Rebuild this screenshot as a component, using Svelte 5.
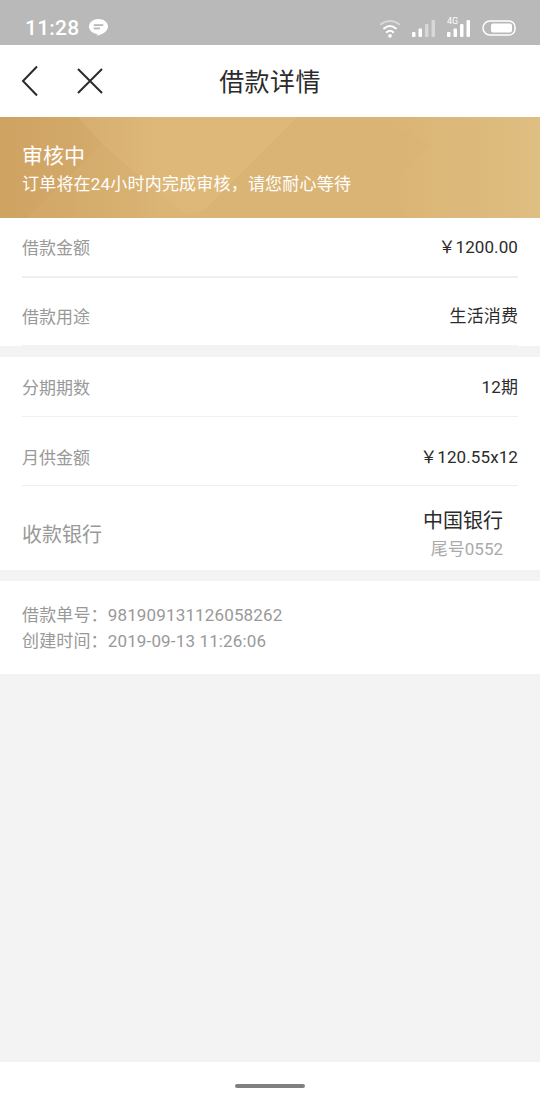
<script>
  const firstGroup = [
    { label: "借款金额", value: "￥1200.00" },
    { label: "借款用途", value: "生活消费" },
  ];
  const secondGroup = [
    { label: "分期期数", value: "12期" },
    { label: "月供金额", value: "￥120.55x12" },
  ];
</script>

<div class="page">
  <div class="status">
    <span class="time">11:28</span>
    <svg class="msg" width="21" height="19" viewBox="0 0 22 20">
      <path d="M11 1C5.500 1 1 4.600 1 9c0 4.200 4 7.600 9 7.900-.2.7-.8 1.300-1.400 1.900 3.600-.2 12.400-3.800 12.400-9.800C21 4.600 16.500 1 11 1z" fill="#fff" />
      <rect x="6" y="6.500" width="10" height="2" fill="#b9b9b9" />
      <rect x="6" y="10" width="6.500" height="2" fill="#b9b9b9" />
    </svg>
    <span class="spacer"></span>
    <svg class="wifi" width="22" height="22" viewBox="0 0 24 24" fill="none" stroke="#fff" stroke-linecap="round">
      <path d="M2 8C8 3 16 3 22 8" stroke-width="2.200" opacity="0.45" />
      <path d="M5.500 12.500C9.500 9.200 14.500 9.200 18.500 12.500" stroke-width="2.200" />
      <path d="M8.500 16.500C10.600 14.800 13.400 14.800 15.500 16.500" stroke-width="2.200" />
      <circle cx="12" cy="20.500" r="2" fill="#fff" stroke="none" />
    </svg>
    <svg class="signal" width="26" height="22" viewBox="0 0 26 22" fill="#fff">
      <rect x="1" y="15" width="3.500" height="5" rx="1" />
      <rect x="7.500" y="11.500" width="3.500" height="8.500" rx="1" />
      <rect x="14" y="7" width="3.500" height="13" rx="1" opacity="0.45" />
      <rect x="20.500" y="3" width="3.500" height="17" rx="1" opacity="0.45" />
    </svg>
    <div class="signal2">
      <span class="four">4G</span>
      <svg width="26" height="22" viewBox="0 0 26 22" fill="#fff">
        <rect x="1" y="15" width="3.500" height="5" rx="1" />
        <rect x="7.500" y="11.500" width="3.500" height="8.500" rx="1" />
        <rect x="14" y="7" width="3.500" height="13" rx="1" />
        <rect x="20.500" y="3" width="3.500" height="17" rx="1" />
      </svg>
    </div>
    <svg class="battery" width="35" height="18" viewBox="0 0 35 18">
      <path d="M9 2h19a6 6 0 0 1 6 6v2a6 6 0 0 1-6 6H9a7 7 0 0 1 0-14z" fill="none" stroke="#fff" stroke-width="1.500" />
      <rect x="10" y="4.500" width="21" height="9" rx="2" fill="#fff" />
    </svg>
  </div>

  <div class="nav">
    <svg class="back" width="20" height="32" viewBox="0 0 20 32" fill="none" stroke="#2b2b2b" stroke-width="2">
      <path d="M17 1.500L3 16l14 14.500" />
    </svg>
    <svg class="close" width="28" height="28" viewBox="0 0 28 28" fill="none" stroke="#2b2b2b" stroke-width="2">
      <path d="M2 2l24 24M26 2L2 26" />
    </svg>
    <h1>借款详情</h1>
  </div>

  <div class="banner">
    <svg class="shapes" width="540" height="101" viewBox="0 0 540 101" preserveAspectRatio="none">
      <path d="M78 0h219l-92 92c-8 6-16 8-24 3L102 27z" fill="#e6c88e" opacity="0.22" />
      <path d="M102 27L27 101h178z" fill="#dcb778" opacity="0.2" />
      <path d="M405 101c-15-30-2-55 28-72l-55-29h162v101z" fill="#e6c88e" opacity="0.08" />
    </svg>
    <div class="title">审核中</div>
    <div class="sub">订单将在24小时内完成审核，请您耐心等待</div>
  </div>

  <section class="group one">
    {#each firstGroup as row}
      <div class="row">
        <span class="label">{row.label}</span>
        <span class="value">{row.value}</span>
      </div>
    {/each}
  </section>

  <section class="group two">
    {#each secondGroup as row}
      <div class="row">
        <span class="label">{row.label}</span>
        <span class="value">{row.value}</span>
      </div>
    {/each}
    <div class="row bank">
      <span class="bank-label">收款银行</span>
      <div class="bank-info">
        <span class="bank-name">中国银行</span>
        <span class="tail">尾号0552</span>
      </div>
    </div>
  </section>

  <section class="meta">
    <div>借款单号：981909131126058262</div>
    <div>创建时间：2019-09-13 11:26:06</div>
  </section>

  <div class="fill"></div>

  <div class="home"><span></span></div>
</div>

<style>
  :global(body) {
    margin: 0;
    background: #f3f3f3;
  }

  .page {
    width: 540px;
    height: 1110px;
    display: flex;
    flex-direction: column;
    font-family: Roboto, "Noto Sans CJK SC", sans-serif;
    overflow: hidden;
  }

  .status {
    height: 45px;
    flex: none;
    background: #b9b9b9;
    display: flex;
    align-items: center;
    padding: 10px 24px 0 25px;
    box-sizing: border-box;
    color: #fff;
  }

  .time {
    font-size: 21px;
    font-weight: 500;
    letter-spacing: 0.2px;
  }

  .msg {
    margin-left: 9px;
  }

  .spacer {
    flex: 1;
  }

  .signal {
    margin-left: 10px;
  }

  .signal2 {
    position: relative;
    margin-left: 9px;
    display: flex;
  }

  .four {
    position: absolute;
    left: 1px;
    top: -1px;
    font-size: 9px;
    line-height: 10px;
  }

  .battery {
    margin-left: 9px;
  }

  .nav {
    height: 72px;
    flex: none;
    box-sizing: border-box;
    padding-bottom: 2px;
    background: #fff;
    position: relative;
    display: flex;
    align-items: center;
    justify-content: center;
  }

  .back {
    position: absolute;
    left: 20px;
    top: 20px;
  }

  .close {
    position: absolute;
    left: 76px;
    top: 22px;
  }

  h1 {
    margin: 0;
    font-size: 25px;
    font-weight: 400;
    letter-spacing: 0.4px;
    color: #2b2b2b;
  }

  .banner {
    height: 101px;
    flex: none;
    position: relative;
    box-sizing: border-box;
    padding: 24px 22px 0;
    color: #fff;
    background: linear-gradient(90deg, #cfa362 0%, #d2a868 14%, #dab474 30%, #dab475 75%, #dfbd80 100%);
    overflow: hidden;
  }

  .shapes {
    position: absolute;
    left: 0;
    top: 0;
  }

  .title {
    position: relative;
    font-size: 21px;
    line-height: 30px;
  }

  .sub {
    position: relative;
    font-size: 17px;
    line-height: 26px;
    letter-spacing: 0.2px;
  }

  .group {
    background: #fff;
    flex: none;
  }

  .one {
    height: 128px;
  }

  .two {
    margin-top: 11px;
    height: 213px;
  }

  .row {
    margin: 0 22px;
    box-sizing: border-box;
    display: flex;
    align-items: flex-start;
    justify-content: space-between;
    line-height: 24px;
    border-bottom: 1px solid #efefef;
  }

  .one .row:first-child {
    height: 60px;
    padding-top: 17px;
    border-bottom-width: 2px;
  }

  .one .row:last-child {
    height: 68px;
    padding-top: 26px;
    border-bottom: 1px solid #f3f3f3;
  }

  .two .row:first-child {
    height: 60px;
    padding-top: 18px;
  }

  .two .row:nth-child(2) {
    height: 69px;
    padding-top: 28px;
  }

  .two .row.bank {
    height: 84px;
    padding-top: 20px;
    border-bottom: 0;
  }

  .label {
    margin-top: 1px;
    font-size: 17px;
    color: #999;
  }

  .value {
    font-size: 17px;
    letter-spacing: 0.1px;
    color: #2b2b2b;
  }

  .bank-label {
    margin-top: 15px;
    font-size: 20px;
    line-height: 28px;
    color: #999;
  }

  .bank-info {
    display: flex;
    flex-direction: column;
    align-items: flex-end;
    margin-right: 15px;
  }

  .bank-name {
    font-size: 20px;
    line-height: 30px;
    color: #2b2b2b;
  }

  .tail {
    font-size: 17px;
    line-height: 26px;
    color: #aaa;
  }

  .meta {
    margin-top: 11px;
    height: 93px;
    flex: none;
    background: #fff;
    box-sizing: border-box;
    padding: 21px 22px 0;
    font-size: 17px;
    line-height: 26px;
    letter-spacing: 0.15px;
    color: #999;
  }

  .fill {
    flex: 1;
    background: #f3f3f3;
  }

  .home {
    height: 48px;
    flex: none;
    background: #fff;
    position: relative;
  }

  .home span {
    position: absolute;
    left: 235px;
    top: 22px;
    width: 70px;
    height: 4px;
    border-radius: 2px;
    background: #808080;
  }
</style>
